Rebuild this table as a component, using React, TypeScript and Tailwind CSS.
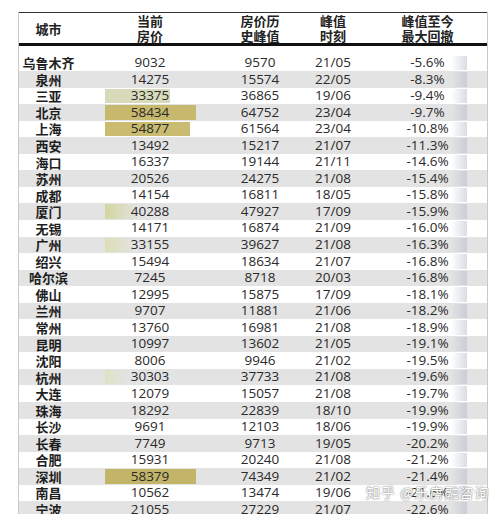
import React from 'react';

type Row = {
  city: string;
  price: number;
  peak: number;
  date: string;
  drop: string;
};

const rows: Row[] = [
  { city: '乌鲁木齐', price: 9032, peak: 9570, date: '21/05', drop: '-5.6%' },
  { city: '泉州', price: 14275, peak: 15574, date: '22/05', drop: '-8.3%' },
  { city: '三亚', price: 33375, peak: 36865, date: '19/06', drop: '-9.4%' },
  { city: '北京', price: 58434, peak: 64752, date: '23/04', drop: '-9.7%' },
  { city: '上海', price: 54877, peak: 61564, date: '23/04', drop: '-10.8%' },
  { city: '西安', price: 13492, peak: 15217, date: '21/07', drop: '-11.3%' },
  { city: '海口', price: 16337, peak: 19144, date: '21/11', drop: '-14.6%' },
  { city: '苏州', price: 20526, peak: 24275, date: '21/08', drop: '-15.4%' },
  { city: '成都', price: 14154, peak: 16811, date: '18/05', drop: '-15.8%' },
  { city: '厦门', price: 40288, peak: 47927, date: '17/09', drop: '-15.9%' },
  { city: '无锡', price: 14171, peak: 16874, date: '21/09', drop: '-16.0%' },
  { city: '广州', price: 33155, peak: 39627, date: '21/08', drop: '-16.3%' },
  { city: '绍兴', price: 15494, peak: 18634, date: '21/07', drop: '-16.8%' },
  { city: '哈尔滨', price: 7245, peak: 8718, date: '20/03', drop: '-16.8%' },
  { city: '佛山', price: 12995, peak: 15875, date: '17/09', drop: '-18.1%' },
  { city: '兰州', price: 9707, peak: 11881, date: '21/06', drop: '-18.2%' },
  { city: '常州', price: 13760, peak: 16981, date: '21/08', drop: '-18.9%' },
  { city: '昆明', price: 10997, peak: 13602, date: '21/05', drop: '-19.1%' },
  { city: '沈阳', price: 8006, peak: 9946, date: '21/02', drop: '-19.5%' },
  { city: '杭州', price: 30303, peak: 37733, date: '21/08', drop: '-19.6%' },
  { city: '大连', price: 12079, peak: 15057, date: '21/08', drop: '-19.7%' },
  { city: '珠海', price: 18292, peak: 22839, date: '18/10', drop: '-19.9%' },
  { city: '长沙', price: 9691, peak: 12103, date: '18/06', drop: '-19.9%' },
  { city: '长春', price: 7749, peak: 9713, date: '19/05', drop: '-20.2%' },
  { city: '合肥', price: 15931, peak: 20240, date: '21/08', drop: '-21.2%' },
  { city: '深圳', price: 58379, peak: 74349, date: '21/02', drop: '-21.4%' },
  { city: '南昌', price: 10562, peak: 13474, date: '19/06', drop: '-21.6%' },
  { city: '宁波', price: 21055, peak: 27229, date: '21/07', drop: '-22.6%' },
];

// bars that show up in the 当前房价 column
const bars: Record<string, { w: number; cls: string }> = {
  三亚: { w: 65, cls: 'bg-[#d8dbbb]' },
  北京: { w: 91, cls: 'bg-[#c6b86c]' },
  上海: { w: 85, cls: 'bg-[#c9bb70]' },
  深圳: { w: 91, cls: 'bg-[#c3b567]' },
  厦门: { w: 34, cls: 'bg-gradient-to-r from-[#d3d69f] to-transparent' },
  广州: { w: 30, cls: 'bg-gradient-to-r from-[#dcdfb4] to-transparent' },
  杭州: { w: 22, cls: 'bg-gradient-to-r from-[#e0e2c4] to-transparent' },
};

const cols = 'grid grid-cols-[59px_144px_76px_70px_119px]';
const cjk = "font-['Noto_Sans_CJK_SC','Noto_Sans',sans-serif]";
const num = "font-['Open_Sans','Noto_Sans_CJK_SC',sans-serif]";

const App: React.FC = () => {
  return (
    <div className={`relative w-[498px] h-[514px] overflow-hidden bg-white text-[#2a2a2a] ${cjk}`}>
      <div className="ml-[18px] mt-[12px] w-[470px] border-x border-[#c9c9c9]">
        <div className={`${cols} h-[34px] items-center border-t border-[#333] border-b-[3px] border-b-[#111] text-[13px] leading-[15px] font-bold text-center text-[#222]`}>
          <div>城市</div>
          <div>当前<br />房价</div>
          <div>房价历<br />史峰值</div>
          <div>峰值<br />时刻</div>
          <div>峰值至今<br />最大回撤</div>
        </div>
        <div className="h-[8.5px]" />
        {rows.map((r, i) => {
          const bar = bars[r.city];
          return (
            <div
              key={r.city}
              className={`${cols} h-[16.55px] items-center text-center ${i % 2 ? 'bg-[#e3e3e3]' : 'bg-white'}`}
            >
              <div className="text-[13px] font-bold text-[#1e1e1e] leading-none">{r.city}</div>
              <div className="relative h-full flex items-center justify-center">
                {bar && (
                  <div
                    className={`absolute left-[27px] top-[1px] bottom-[1px] ${bar.cls}`}
                    style={{ width: bar.w }}
                  />
                )}
                <span className={`relative ${num} text-[13.5px] leading-none`}>{r.price}</span>
              </div>
              <div className={`${num} text-[13.5px] leading-none`}>{r.peak}</div>
              <div className={`${num} text-[13.5px] leading-none`}>{r.date}</div>
              <div className="relative h-full flex items-center justify-center">
                <div
                  className={`absolute right-[20px] top-[1px] bottom-[1px] w-[16px] bg-gradient-to-r from-transparent ${i % 2 ? 'to-[#c9ced6]' : 'to-[#d9dde4]'}`}
                />
                <span className={`relative ${num} text-[13.5px] leading-none`}>{r.drop}</span>
              </div>
            </div>
          );
        })}
      </div>
      <div className="absolute left-[366px] top-[483px] text-[14px] leading-[18px] tracking-[1px] text-white [text-shadow:0_0_2px_#777,0_0_1px_#999]">
        知乎 @乐房融咨询
      </div>
    </div>
  );
};

export default App;
